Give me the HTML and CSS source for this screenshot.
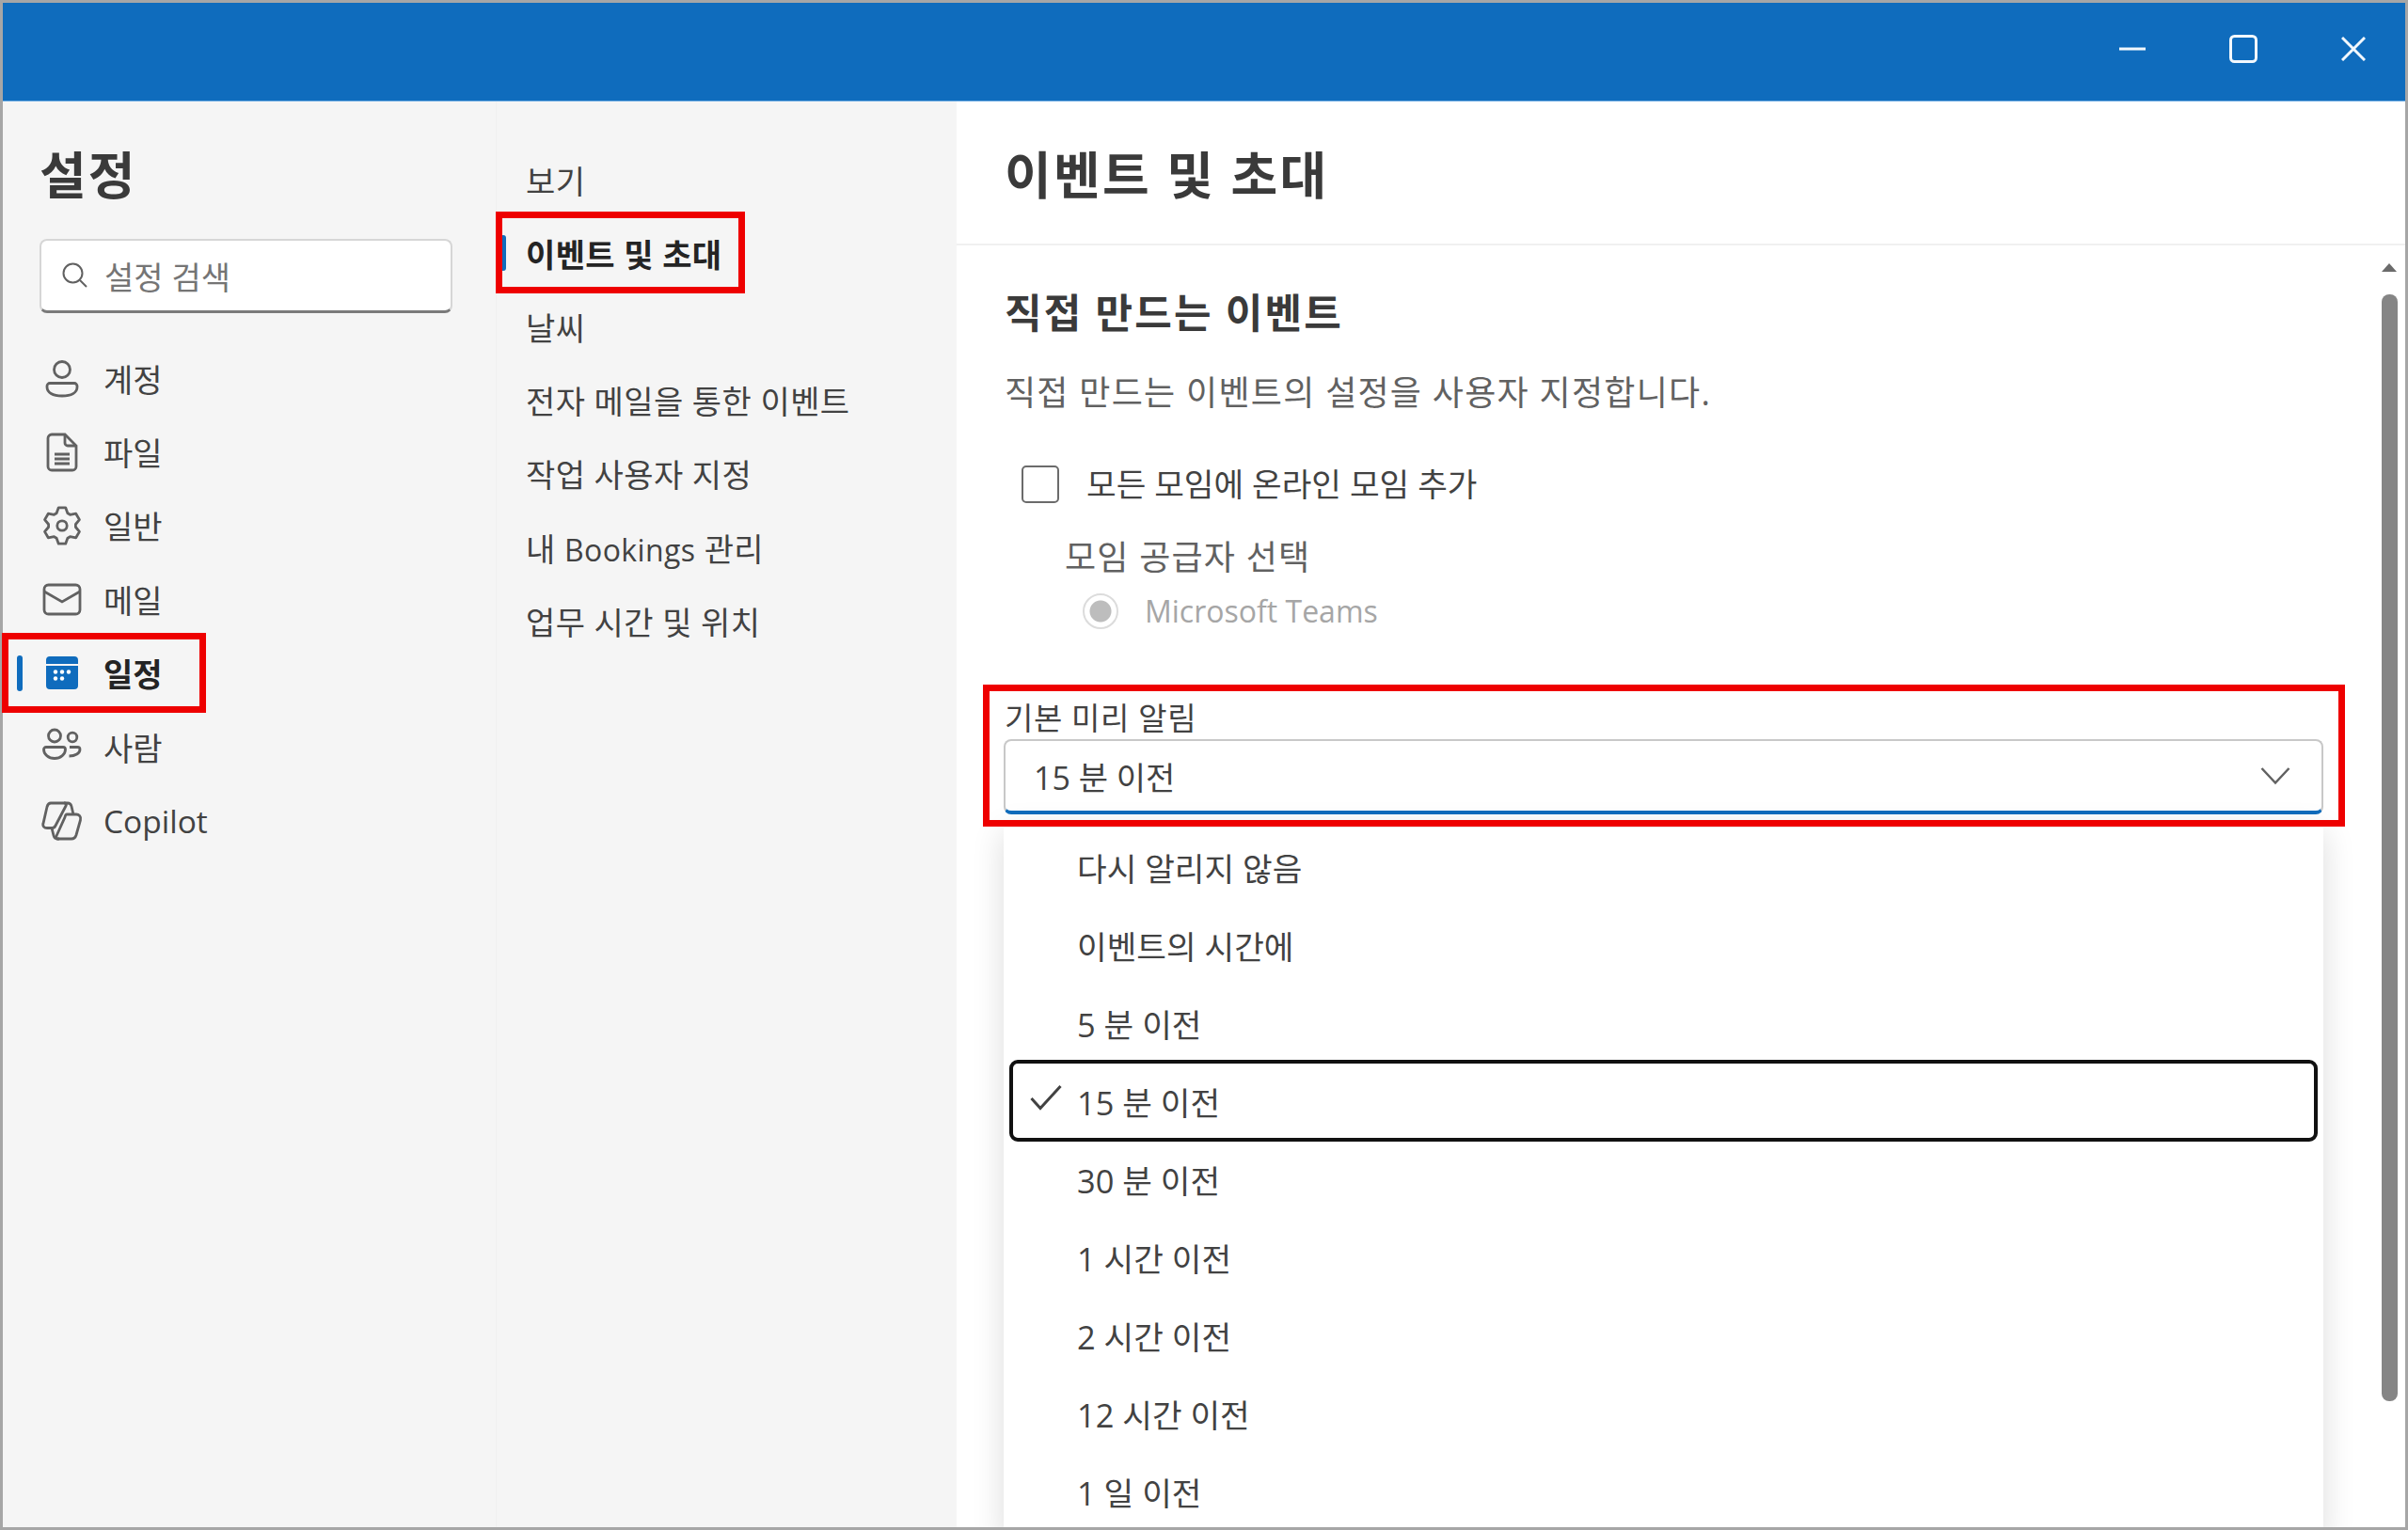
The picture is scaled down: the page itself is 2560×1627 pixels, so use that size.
FILE: index.html
```html
<!DOCTYPE html>
<html lang="ko">
<head>
<meta charset="utf-8">
<title>설정</title>
<link rel="stylesheet" href="styles.css">
</head>
<body>
<div class="window">
  <header class="titlebar">
    <svg class="winbtn" width="28" height="28" viewBox="0 0 28 28"><path d="M0 14H28" /></svg>
    <svg class="winbtn" width="30" height="30" viewBox="0 0 30 30"><rect x="1.5" y="1.5" width="27" height="27" rx="4"/></svg>
    <svg class="winbtn" width="26" height="26" viewBox="0 0 26 26"><path d="M1 1L25 25M25 1L1 25"/></svg>
  </header>
  <div class="body">
    <aside class="side">
      <h1 class="side-title">설정</h1>
      <div class="search">
        <svg class="search-icon" width="30" height="30" viewBox="0 0 30 30"><circle cx="12.5" cy="12.5" r="10"/><path d="M20 20L27 27"/></svg>
        <span>설정 검색</span>
      </div>
      <nav class="nav">
        <a class="nav-item"><svg class="ico" viewBox="0 0 44 44"><circle cx="22" cy="13" r="8.5"/><path d="M9 27.500h26a3 3 0 0 1 3 3v1c0 6-6 9.500-16 9.500S6 37.500 6 31.500v-1a3 3 0 0 1 3-3z"/></svg>계정</a>
        <a class="nav-item"><svg class="ico" viewBox="0 0 44 44"><path d="M11 3h14l12 12v22a4 4 0 0 1-4 4H11a4 4 0 0 1-4-4V7a4 4 0 0 1 4-4z"/><path d="M25 3v9a3 3 0 0 0 3 3h9M14 24h16M14 29h16M14 34h16"/></svg>파일</a>
        <a class="nav-item"><svg class="ico" viewBox="0 0 44 44"><circle cx="22" cy="22" r="5.200"/><path class="gear" d="M16.100 8.750L18.280 2.860H25.720L27.900 8.750L30.520 10.270L36.720 9.210L40.440 15.650L36.420 20.480V23.520L40.440 28.350L36.720 34.790L30.520 33.730L27.900 35.250L25.720 41.140H18.280L16.100 35.250L13.480 33.730L7.280 34.790L3.560 28.350L7.580 23.520V20.480L3.560 15.650L7.280 9.210L13.480 10.270z"/></svg>일반</a>
        <a class="nav-item"><svg class="ico" viewBox="0 0 44 44"><rect x="3" y="7" width="38" height="31" rx="4.500"/><path d="M3 14l19 11 19-11"/></svg>메일</a>
        <a class="nav-item nav-active"><svg class="ico-fill" viewBox="0 0 44 44"><path class="cal" d="M9 4h26a4 4 0 0 1 4 4v4H5V8a4 4 0 0 1 4-4zM5 14h34v21a4 4 0 0 1-4 4H9a4 4 0 0 1-4-4z"/><g class="dots"><circle cx="15" cy="20.500" r="2.200"/><circle cx="22" cy="20.500" r="2.200"/><circle cx="29" cy="20.500" r="2.200"/><circle cx="15" cy="27.500" r="2.200"/><circle cx="22" cy="27.500" r="2.200"/></g></svg>일정</a>
        <a class="nav-item"><svg class="ico" viewBox="0 0 44 44"><circle cx="14" cy="10.500" r="6.500"/><path d="M5 22.500h18a2.500 2.500 0 0 1 2.500 2.500c0 5-5 9.500-11.500 9.500S2.500 30 2.500 25A2.500 2.500 0 0 1 5 22.500z"/><circle cx="33" cy="12" r="4.800"/><path d="M30 22.500h8.500a2.500 2.500 0 0 1 2.500 2.500c0 4-5 7-11.500 7"/></svg>사람</a>
        <a class="nav-item"><svg class="ico" viewBox="0 0 44 44"><path d="M10 3h15c1.500 0 1.800 1.500 1 3L15 27c-1 2-2 2.500-3.500 2.500H6c-3 0-5-2-4-5L6 7c.7-2.500 2-4 4-4z"/><path d="M27 15h10c3 0 5.500 2.500 4.500 6L37 37c-.8 2.500-2.500 4-5 4H17c-1.500 0-1.800-1.500-1-3l9-20c.5-2 1-3 2-3z"/><path d="M24 3h4c2 0 3.500 1.500 4 3.500L34 15M11 29.500l2 8c.5 2 2 3.500 4 3.500h2"/></svg><span class="latin-nav">Copilot</span></a>
      </nav>
    </aside>
    <nav class="sub">
      <a class="sub-item">보기</a>
      <a class="sub-item sub-active">이벤트 및 초대</a>
      <a class="sub-item">날씨</a>
      <a class="sub-item">전자 메일을 통한 이벤트</a>
      <a class="sub-item">작업 사용자 지정</a>
      <a class="sub-item"><span>내 <span class="latin-sub">Bookings</span> 관리</span></a>
      <a class="sub-item">업무 시간 및 위치</a>
    </nav>
    <main class="main">
      <div class="main-head"><h1 class="main-title">이벤트 및 초대</h1></div>
      <div class="main-body">
        <div class="content">
          <h2 class="section-title">직접 만드는 이벤트</h2>
          <p class="desc">직접 만드는 이벤트의 설정을 사용자 지정합니다.</p>
          <div class="check-row"><span class="checkbox"></span><span>모든 모임에 온라인 모임 추가</span></div>
          <div class="provider-label">모임 공급자 선택</div>
          <div class="radio-row"><span class="radio"></span><span>Microsoft Teams</span></div>
          <div class="select-label">기본 미리 알림</div>
          <div class="select">
            <span>15 분 이전</span>
            <svg class="chevron" width="32" height="20" viewBox="0 0 32 20"><path d="M1.500 2L16 17.500 30.500 2"/></svg>
          </div>
          <ul class="menu">
            <li class="menu-item">다시 알리지 않음</li>
            <li class="menu-item">이벤트의 시간에</li>
            <li class="menu-item">5 분 이전</li>
            <li class="menu-item menu-focus"><svg class="check" width="34" height="28" viewBox="0 0 34 28"><path d="M1.500 15L11 25.500 32.500 2"/></svg>15 분 이전</li>
            <li class="menu-item">30 분 이전</li>
            <li class="menu-item">1 시간 이전</li>
            <li class="menu-item">2 시간 이전</li>
            <li class="menu-item">12 시간 이전</li>
            <li class="menu-item">1 일 이전</li>
          </ul>
        </div>
        <div class="scrollbar">
          <svg class="scroll-up" width="16" height="10" viewBox="0 0 16 10"><path d="M8 0L16 9H0z"/></svg>
          <div class="thumb"></div>
        </div>
      </div>
    </main>
  </div>
  <div class="mark mark-nav"></div>
  <div class="mark mark-sub"></div>
  <div class="mark mark-select"></div>
</div>
</body>
</html>
```

FILE: styles.css
```css
* { box-sizing: border-box; }
html, body { margin: 0; padding: 0; background: #fff; }
body {
  font-family: "Open Sans", "Noto Sans CJK KR", sans-serif;
  color: #424242;
  overflow: hidden;
}
.window {
  position: relative;
  width: 2560px;
  height: 1627px;
  border: 3px solid #a6a6a6;
  display: flex;
  flex-direction: column;
}
.titlebar {
  flex: 0 0 105px;
  background: #0f6cbd;
  display: flex;
  align-items: center;
  justify-content: flex-end;
  gap: 89px;
  padding: 0 42px 7px 0;
  border-bottom: 1px solid #7fb6e6;
}
.winbtn { fill: none; stroke: #f2f8fd; stroke-width: 3; }
.body { flex: 1; display: flex; min-height: 0; overflow: hidden; }
.side {
  flex: 0 0 524px;
  background: #f5f5f5;
  padding: 53px 46px 0 39px;
  border-right: 1px solid #f0f0f0;
}
.side-title {
  margin: 0;
  font-size: 54px;
  line-height: 50px;
  letter-spacing: 2px;
  font-weight: 700;
  color: #3a3a3a;
}
.search {
  margin-top: 43px;
  height: 79px;
  width: 439px;
  background: #fff;
  border: 2px solid #d6d6d6;
  border-bottom: 3px solid #7a7a7a;
  border-radius: 8px;
  display: flex;
  align-items: center;
  gap: 16px;
  padding-left: 21px;
  font-size: 34px;
  color: #757575;
}
.search-icon { fill: none; stroke: #616161; stroke-width: 2; }
.nav { margin-top: 30px; display: flex; flex-direction: column; }
.nav-item {
  height: 78.4px;
  display: flex;
  align-items: center;
  gap: 22px;
  padding-left: 2px;
  font-size: 34px;
  color: #424242;
  position: relative;
}
.latin-nav { font-size: 33.5px; }
.latin-sub { font-size: 32px; }
.ico { width: 44px; height: 44px; flex: none; fill: none; stroke: #616161; stroke-width: 2.800; }
.gear { stroke-linejoin: round; }
.ico-fill { width: 44px; height: 44px; flex: none; }
.cal { fill: #0f6cbd; }
.dots { fill: #fff; }
.nav-active { font-weight: 700; color: #242424; }
.nav-active::before {
  content: "";
  position: absolute;
  left: -24px;
  top: 20px;
  width: 6px;
  height: 38px;
  border-radius: 3px;
  background: #0f6cbd;
}
.sub {
  flex: 0 0 489px;
  background: #f5f5f5;
  padding: 44px 0 0 31px;
  display: flex;
  flex-direction: column;
}
.sub-item {
  height: 78.2px;
  display: flex;
  align-items: center;
  font-size: 34px;
  letter-spacing: .4px;
  color: #424242;
  position: relative;
}
.sub-active { font-weight: 700; color: #242424; }
.sub-active::before {
  content: "";
  position: absolute;
  left: -27px;
  top: 20px;
  width: 6px;
  height: 38px;
  border-radius: 3px;
  background: #0f6cbd;
}
.main { flex: 1; display: flex; flex-direction: column; background: #fff; min-width: 0; }
.main-head {
  flex: 0 0 153px;
  border-bottom: 2px solid #f0f0f0;
  padding: 53px 0 0 51px;
}
.main-title {
  margin: 0;
  font-size: 54px;
  line-height: 50px;
  letter-spacing: 2.3px;
  font-weight: 700;
  color: #3a3a3a;
}
.main-body { flex: 1; display: flex; min-height: 0; position: relative; }
.content { flex: 1; padding: 47px 0 0 51px; position: relative; min-width: 0; }
.section-title {
  margin: 0;
  font-size: 43px;
  line-height: 50px;
  letter-spacing: 2.1px;
  font-weight: 700;
  color: #3a3a3a;
}
.desc {
  margin: 35px 0 0;
  font-size: 36px;
  line-height: 50px;
  letter-spacing: 1.25px;
  color: #616161;
}
.check-row {
  margin: 50px 0 0 18px;
  display: flex;
  align-items: center;
  gap: 29px;
  font-size: 34.4px;
  line-height: 44px;
  color: #424242;
}
.checkbox {
  width: 40px;
  height: 40px;
  border: 2.5px solid #6b6b6b;
  border-radius: 5px;
  background: #fff;
}
.provider-label {
  margin: 33px 0 0 64px;
  font-size: 36px;
  line-height: 46px;
  letter-spacing: 1.2px;
  color: #616161;
}
.radio-row {
  margin: 12px 0 0 83px;
  display: flex;
  align-items: center;
  gap: 28px;
  font-size: 32px;
  line-height: 44px;
  color: #a6a6a6;
}
.radio {
  width: 38px;
  height: 38px;
  border-radius: 50%;
  border: 2px solid #dcdcdc;
  background: radial-gradient(circle, #bdbdbd 0 11px, #fff 12px);
}
.select-label {
  margin: 72px 0 0;
  font-size: 33px;
  line-height: 40px;
  letter-spacing: .6px;
  color: #424242;
}
.select {
  margin: 2px 0 0 -1px;
  width: 1403px;
  height: 80px;
  border: 2px solid #c8c8c8;
  border-bottom: 4px solid #0f6cbd;
  border-radius: 8px;
  display: flex;
  align-items: center;
  justify-content: space-between;
  padding: 0 33px 0 30px;
  font-size: 34px;
  color: #424242;
}
.chevron { fill: none; stroke: #616161; stroke-width: 2.500; }
.menu {
  list-style: none;
  margin: 14px 0 0 -1px;
  padding: 0 6px;
  width: 1403px;
  height: 760px;
  background: #fff;
  box-shadow: 0 4px 32px rgba(0, 0, 0, .14);
  position: relative;
  z-index: 2;
}
.menu-item {
  height: 83.100px;
  display: flex;
  align-items: center;
  padding-left: 72px;
  font-size: 34.4px;
  color: #424242;
  position: relative;
}
.menu-focus {
  border: 4px solid #111;
  border-radius: 9px;
  padding-left: 68px;
  height: 87px;
  margin: -2px 0;
}
.check {
  position: absolute;
  left: 18px;
  top: 22px;
  fill: none;
  stroke: #424242;
  stroke-width: 3;
}
.scrollbar {
  flex: 0 0 26px;
  margin-right: 4px;
  display: flex;
  flex-direction: column;
  align-items: center;
  padding-top: 19px;
}
.scroll-up { fill: #6b6b6b; }
.thumb {
  margin-top: 23px;
  width: 17px;
  height: 1177px;
  border-radius: 8px;
  background: #858585;
}
.mark {
  position: absolute;
  border: 7px solid #ee0000;
  z-index: 5;
}
.mark-nav { left: -1px; top: 670px; width: 217px; height: 85px; }
.mark-sub { left: 524px; top: 222px; width: 265px; height: 87px; }
.mark-select { left: 1042px; top: 725px; width: 1448px; height: 151px; }
```
